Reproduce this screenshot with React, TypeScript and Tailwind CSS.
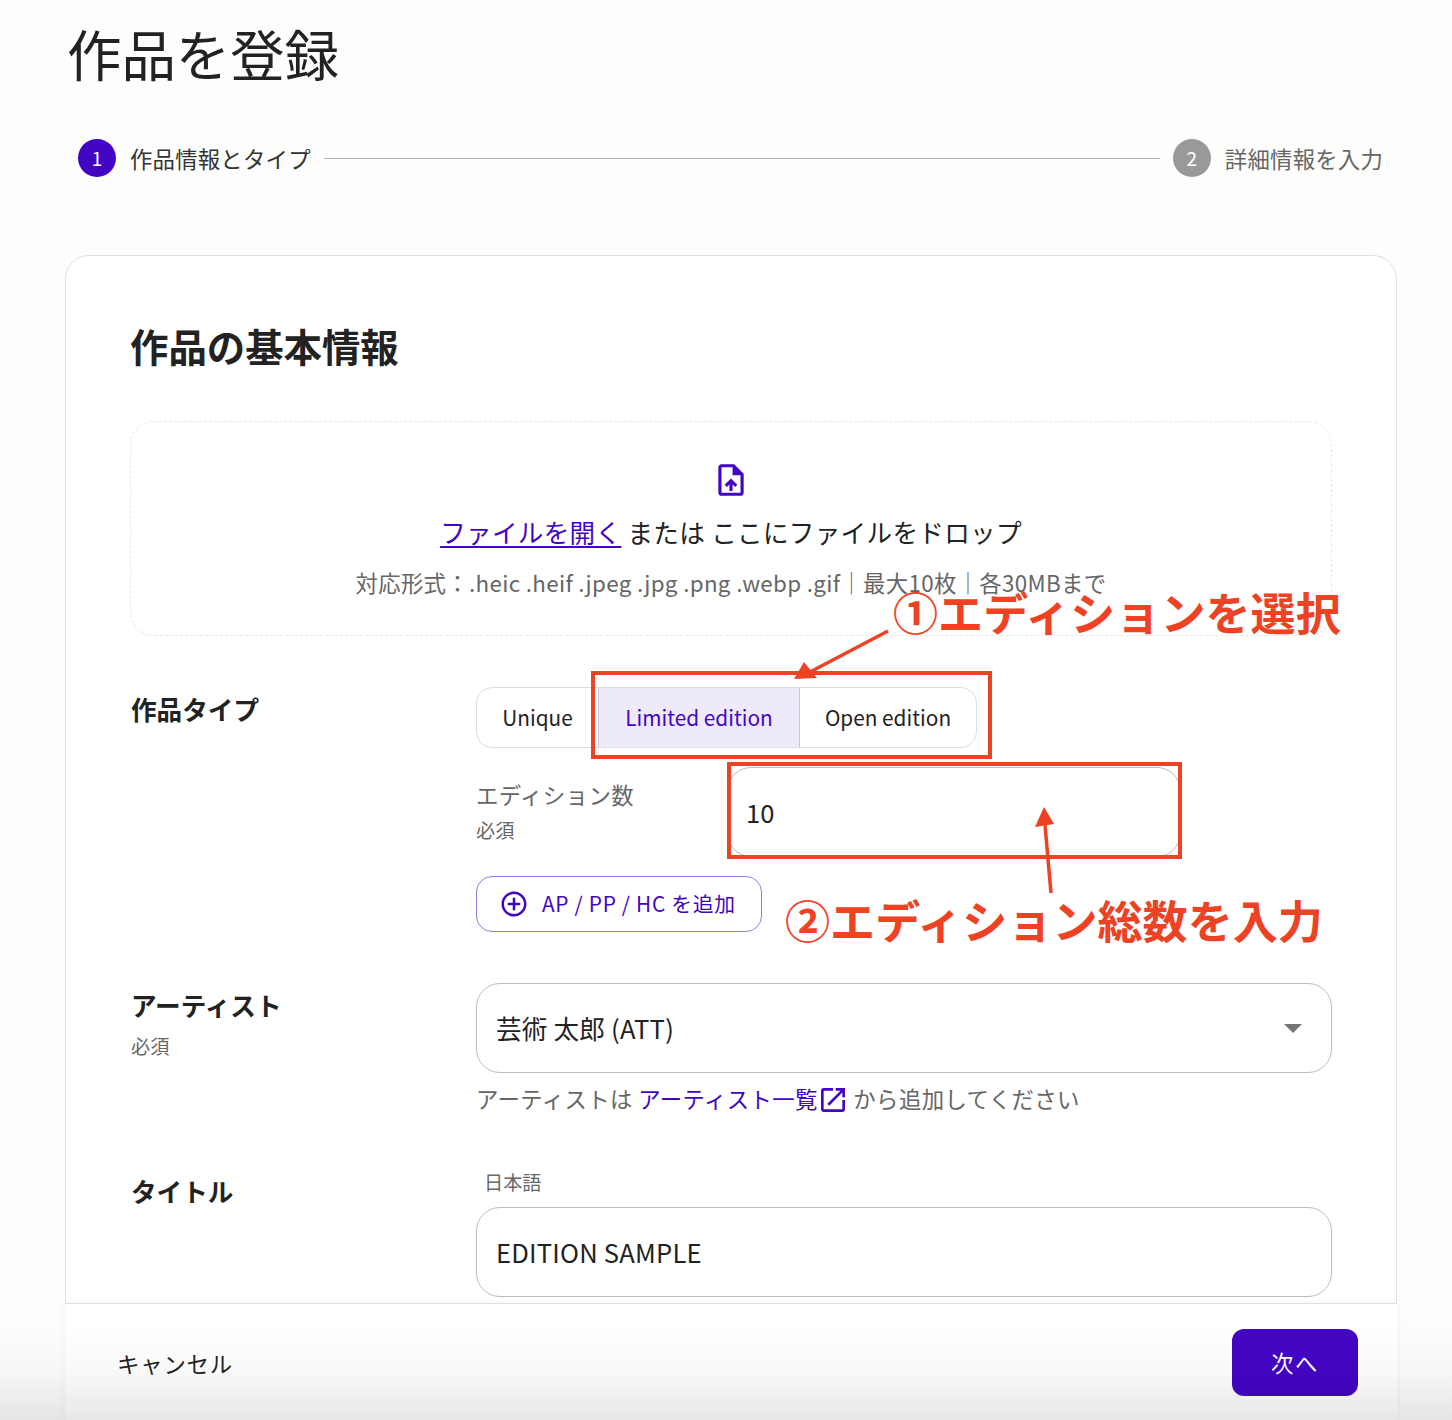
// Material style glyphs used by the form
function UploadFileIcon() {
  return (
    <svg width="38" height="38" viewBox="0 0 24 24" fill="#4305c4">
      <path d="M14 2H6c-1.1 0-1.99.9-1.99 2L4 20c0 1.1.89 2 1.99 2H18c1.1 0 2-.9 2-2V8l-6-6zm4 18H6V4h7v5h5v11zM8 15.01l1.41 1.41L11 14.84V19h2v-4.16l1.59 1.59L16 15.01 12.01 11 8 15.01z" />
    </svg>
  );
}

function OpenInNewIcon() {
  return (
    <svg width="32" height="32" viewBox="0 0 24 24" fill="#4305c4" className="mx-[-1px] inline-block align-[-8px]">
      <path d="M19 19H5V5h7V3H5c-1.11 0-2 .9-2 2v14c0 1.1.89 2 2 2h14c1.1 0 2-.9 2-2v-7h-2v7zM14 3v2h3.59l-9.83 9.83 1.41 1.41L19 6.41V10h2V3h-7z" />
    </svg>
  );
}

function AddCircleIcon() {
  return (
    <svg width="30" height="30" viewBox="0 0 24 24" fill="#4305c4">
      <path d="M13 7h-2v4H7v2h4v4h2v-4h4v-2h-4V7zm-1-5C6.48 2 2 6.48 2 12s4.48 10 10 10 10-4.48 10-10S17.52 2 12 2zm0 18c-4.41 0-8-3.59-8-8s3.59-8 8-8 8 3.59 8 8-3.59 8-8 8z" />
    </svg>
  );
}

function Stepper() {
  return (
    <div className="mt-[47px] flex h-[38px] items-center pl-[13px] pr-[14px]">
      <span className="flex h-[38px] w-[38px] shrink-0 items-center justify-center rounded-full bg-[#4305c4] text-[19px] text-white">1</span>
      <span className="ml-[14px] text-[22.4px] leading-none tracking-[0.2px] text-[#333]">作品情報とタイプ</span>
      <div className="mx-[13px] h-px flex-1 bg-[#b5b5b5]" />
      <span className="flex h-[38px] w-[38px] shrink-0 items-center justify-center rounded-full bg-[#999] text-[19px] text-white">2</span>
      <span className="ml-[14px] text-[22.4px] leading-none tracking-[0.2px] text-[#666]">詳細情報を入力</span>
    </div>
  );
}

function Dropzone() {
  return (
    <div className="mt-[47px] flex h-[215px] flex-col items-center rounded-[24px] border border-dashed border-[#e8e8e8] pt-[39px]">
      <UploadFileIcon />
      <p className="mt-[14px] text-[25.6px] leading-[38px] tracking-[0.3px] text-[#222]">
        <span className="text-[#4305c4] underline underline-offset-[3px]">ファイルを開く</span> または ここにファイルをドロップ
      </p>
      <p className="mt-[13px] text-[22.4px] leading-[36px] tracking-[0.32px] text-[#666]">対応形式：.heic .heif .jpeg .jpg .png .webp .gif｜最大10枚｜各30MBまで</p>
    </div>
  );
}

function TypeRow() {
  return (
    <div className="mt-[51px] flex">
      <div className="w-[346px] shrink-0 pl-px pt-[3px] text-[25.6px] font-bold leading-[38px] text-[#222]">作品タイプ</div>
      <div className="flex-1">
        <div className="flex h-[61px] w-[501px] overflow-hidden rounded-[16px] border border-[#dedede] bg-white text-[20.8px] text-[#222]">
          <div className="flex w-[121px] items-center justify-center">Unique</div>
          <div className="flex w-[202px] items-center justify-center border-x border-[#c8c4dc] bg-[#eeeaf9] text-[#4305c4]">Limited edition</div>
          <div className="flex flex-1 items-center justify-center">Open edition</div>
        </div>
        <div className="mt-[19px] flex">
          <div className="w-[251px] shrink-0 pt-[9px] text-[#666]">
            <div className="text-[22.4px] leading-[36px] tracking-[0.4px]">エディション数</div>
            <div className="mt-[4px] text-[19.2px] leading-[28px]">必須</div>
          </div>
          <div className="flex h-[90px] w-[454px] items-center rounded-[24px] border border-[#bdbdbd] bg-white px-[18px] text-[25.6px] text-[#222]">10</div>
        </div>
        <button className="mt-[19px] flex h-[56px] w-[286px] items-center rounded-[16px] border border-[#9b7ce6] bg-white pl-[22px] text-[20.8px] tracking-[0.7px] text-[#4305c4]">
          <AddCircleIcon />
          <span className="ml-[13px]">AP / PP / HC を追加</span>
        </button>
      </div>
    </div>
  );
}

function ArtistRow() {
  return (
    <div className="mt-[51px] flex">
      <div className="w-[346px] shrink-0 pl-px text-[#222]">
        <div className="mt-[-1px] text-[25.6px] font-bold leading-[46px]">アーティスト</div>
        <div className="mt-[4px] text-[19.2px] leading-[28px] text-[#666]">必須</div>
      </div>
      <div className="flex-1">
        <div className="flex h-[90px] items-center justify-between rounded-[24px] border border-[#bdbdbd] bg-white pl-[19px] pr-[29px] text-[25.6px] tracking-[0.2px] text-[#222]">
          <span>芸術 太郎 (ATT)</span>
          <span className="h-0 w-0 border-x-[9px] border-t-[9px] border-x-transparent border-t-[#757575]" />
        </div>
        <p className="mt-[7px] text-[22.4px] leading-[36px] tracking-[0.4px] text-[#666]">
          アーティストは <span className="text-[#4305c4]">アーティスト一覧</span>
          <OpenInNewIcon /> から追加してください
        </p>
      </div>
    </div>
  );
}

function TitleRow() {
  return (
    <div className="mt-[52px] flex">
      <div className="w-[346px] shrink-0 pl-px pt-[4px] text-[25.6px] font-bold leading-[38px] text-[#222]">タイトル</div>
      <div className="flex-1">
        <div className="pl-[8px] text-[19.2px] leading-[28px] text-[#666]">日本語</div>
        <div className="mt-[11px] flex h-[90px] items-center rounded-[24px] border border-[#bdbdbd] bg-white px-[19px] text-[25.6px] tracking-[0.2px] text-[#222]">EDITION SAMPLE</div>
      </div>
    </div>
  );
}

function Annotations() {
  return (
    <>
      <div className="absolute left-[591px] top-[671px] h-[88px] w-[401px] border-4 border-[#ee4224]" />
      <div className="absolute left-[727px] top-[762px] h-[97px] w-[455px] border-4 border-[#ee4224]" />
      <svg className="absolute left-0 top-0" width="1452" height="1420" viewBox="0 0 1452 1420" fill="none">
        <path d="M888 631 810 672" stroke="#ee4224" strokeWidth="3.5" />
        <path d="M804 662 794 679 817 678Z" fill="#ee4224" />
        <path d="M1051 893 1045 825" stroke="#ee4224" strokeWidth="3.5" />
        <path d="M1044 807 1035 827 1054 824Z" fill="#ee4224" />
      </svg>
      <div className="absolute left-[893px] top-[579px] whitespace-nowrap text-[45.1px] font-bold leading-[66px] text-[#ee4224]">①エディションを選択</div>
      <div className="absolute left-[785px] top-[887px] whitespace-nowrap text-[45.1px] font-bold leading-[66px] text-[#ee4224]">②エディション総数を入力</div>
    </>
  );
}

export default function App() {
  return (
    <div className="relative h-[1420px] overflow-hidden bg-[#fdfdfb] pl-[65px] pr-[55px] font-['Noto_Sans_CJK_JP',sans-serif]">
      <h1 className="pl-[2px] pt-[14px] text-[54.4px] leading-[78px] text-[#222]">作品を登録</h1>
      <Stepper />

      <div className="mt-[78px] rounded-[24px] border border-[#e0e0e0] bg-white px-[64px] pb-[60px] pt-[60px]">
        <h2 className="text-[38.4px] font-bold leading-[58px] text-[#222]">作品の基本情報</h2>
        <Dropzone />
        <TypeRow />
        <ArtistRow />
        <TitleRow />
      </div>

      <Annotations />

      {/* sticky footer bar */}
      <div className="absolute bottom-0 left-[65px] flex h-[117px] w-[1332px] items-start justify-between border-t border-[#e0e0e0] bg-white pl-[52px] pr-[39px] pt-[25px] shadow-[0_0_8px_rgba(0,0,0,0.05)]">
        <span className="text-[22.4px] leading-[68px] tracking-[0.8px] text-[#222]">キャンセル</span>
        <button className="flex h-[67px] w-[126px] items-center justify-center rounded-[12px] bg-[#4305c4] text-[22.4px] tracking-[1.5px] text-white">次へ</button>
      </div>

      {/* window fade at the bottom edge */}
      <div className="pointer-events-none absolute inset-x-0 bottom-0 h-[100px] bg-gradient-to-b from-transparent via-[#00000006] via-50% to-[#00000018]" />
    </div>
  );
}
